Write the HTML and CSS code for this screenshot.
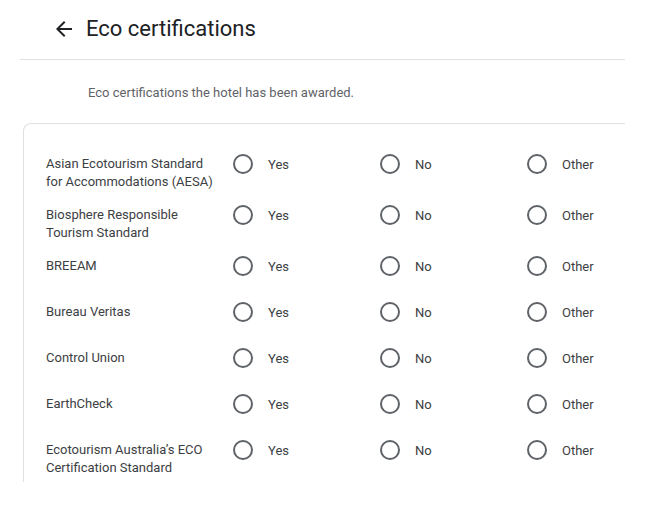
FILE: index.html
```html
<!DOCTYPE html>
<html>
<head>
<meta charset="utf-8">
<link rel="stylesheet" href="styles.css">
</head>
<body>
<div class="page">
  <header class="header">
    <svg class="back" viewBox="0 0 24 24" width="24" height="24"><path d="M20 11H7.83l5.59-5.59L12 4l-8 8 8 8 1.41-1.41L7.83 13H20v-2z" fill="#202124"/></svg>
    <h1 class="title">Eco certifications</h1>
  </header>
  <p class="subtitle">Eco certifications the hotel has been awarded.</p>
  <div class="card">
    <div class="row"><div class="label">Asian Ecotourism Standard for Accommodations (AESA)</div>
      <div class="opt"><span class="radio"><span class="circle"></span></span><span class="otext">Yes</span></div>
      <div class="opt"><span class="radio"><span class="circle"></span></span><span class="otext">No</span></div>
      <div class="opt"><span class="radio"><span class="circle"></span></span><span class="otext">Other</span></div></div>
    <div class="row"><div class="label">Biosphere Responsible Tourism Standard</div>
      <div class="opt"><span class="radio"><span class="circle"></span></span><span class="otext">Yes</span></div>
      <div class="opt"><span class="radio"><span class="circle"></span></span><span class="otext">No</span></div>
      <div class="opt"><span class="radio"><span class="circle"></span></span><span class="otext">Other</span></div></div>
    <div class="row"><div class="label">BREEAM</div>
      <div class="opt"><span class="radio"><span class="circle"></span></span><span class="otext">Yes</span></div>
      <div class="opt"><span class="radio"><span class="circle"></span></span><span class="otext">No</span></div>
      <div class="opt"><span class="radio"><span class="circle"></span></span><span class="otext">Other</span></div></div>
    <div class="row"><div class="label">Bureau Veritas</div>
      <div class="opt"><span class="radio"><span class="circle"></span></span><span class="otext">Yes</span></div>
      <div class="opt"><span class="radio"><span class="circle"></span></span><span class="otext">No</span></div>
      <div class="opt"><span class="radio"><span class="circle"></span></span><span class="otext">Other</span></div></div>
    <div class="row"><div class="label">Control Union</div>
      <div class="opt"><span class="radio"><span class="circle"></span></span><span class="otext">Yes</span></div>
      <div class="opt"><span class="radio"><span class="circle"></span></span><span class="otext">No</span></div>
      <div class="opt"><span class="radio"><span class="circle"></span></span><span class="otext">Other</span></div></div>
    <div class="row"><div class="label">EarthCheck</div>
      <div class="opt"><span class="radio"><span class="circle"></span></span><span class="otext">Yes</span></div>
      <div class="opt"><span class="radio"><span class="circle"></span></span><span class="otext">No</span></div>
      <div class="opt"><span class="radio"><span class="circle"></span></span><span class="otext">Other</span></div></div>
    <div class="row"><div class="label">Ecotourism Australia’s ECO Certification Standard</div>
      <div class="opt"><span class="radio"><span class="circle"></span></span><span class="otext">Yes</span></div>
      <div class="opt"><span class="radio"><span class="circle"></span></span><span class="otext">No</span></div>
      <div class="opt"><span class="radio"><span class="circle"></span></span><span class="otext">Other</span></div></div>
  </div>
</div>
</body>
</html>
```
FILE: styles.css
```css
html, body {
  margin: 0;
  padding: 0;
  background: #ffffff;
  font-family: Roboto, "Liberation Sans", Arial, sans-serif;
}
.page {
  margin-left: 20px;
  width: 605px;
}
.header {
  display: flex;
  align-items: center;
  height: 60px;
  padding-left: 32px;
  box-sizing: border-box;
  border-bottom: 1px solid #e0e0e0;
  padding-bottom: 2px;
}
.back {
  flex: none;
  display: block;
}
.title {
  margin: 0 0 0 10px;
  font-size: 22px;
  font-weight: 400;
  color: #202124;
  line-height: 26px;
}
.subtitle {
  margin: 0;
  padding: 24px 0 0 68px;
  height: 39px;
  font-size: 13px;
  line-height: 18px;
  color: #5f6368;
}
.card {
  margin-left: 3px;
  height: 359px;
  box-sizing: border-box;
  border: 1px solid #e0e0e0;
  border-right: none;
  border-bottom: none;
  border-top-left-radius: 8px;
  padding: 18px 0 0 22px;
  overflow: hidden;
}
.row {
  display: grid;
  grid-template-columns: 177px 147px 147px 147px;
  align-items: start;
  padding: 2px 0 4px;
}
.label {
  padding: 11px 4px 0 0;
  margin-bottom: -2px;
  font-size: 13px;
  line-height: 18px;
  color: #3c4043;
}
.opt {
  display: flex;
  align-items: center;
  height: 40px;
}
.radio {
  width: 40px;
  height: 40px;
  display: flex;
  align-items: center;
  justify-content: center;
  flex: none;
}
.circle {
  width: 20px;
  height: 20px;
  box-sizing: border-box;
  border: 2px solid #5f6368;
  border-radius: 50%;
}
.otext {
  margin-left: 5px;
  font-size: 13px;
  color: #3c4043;
}
```
